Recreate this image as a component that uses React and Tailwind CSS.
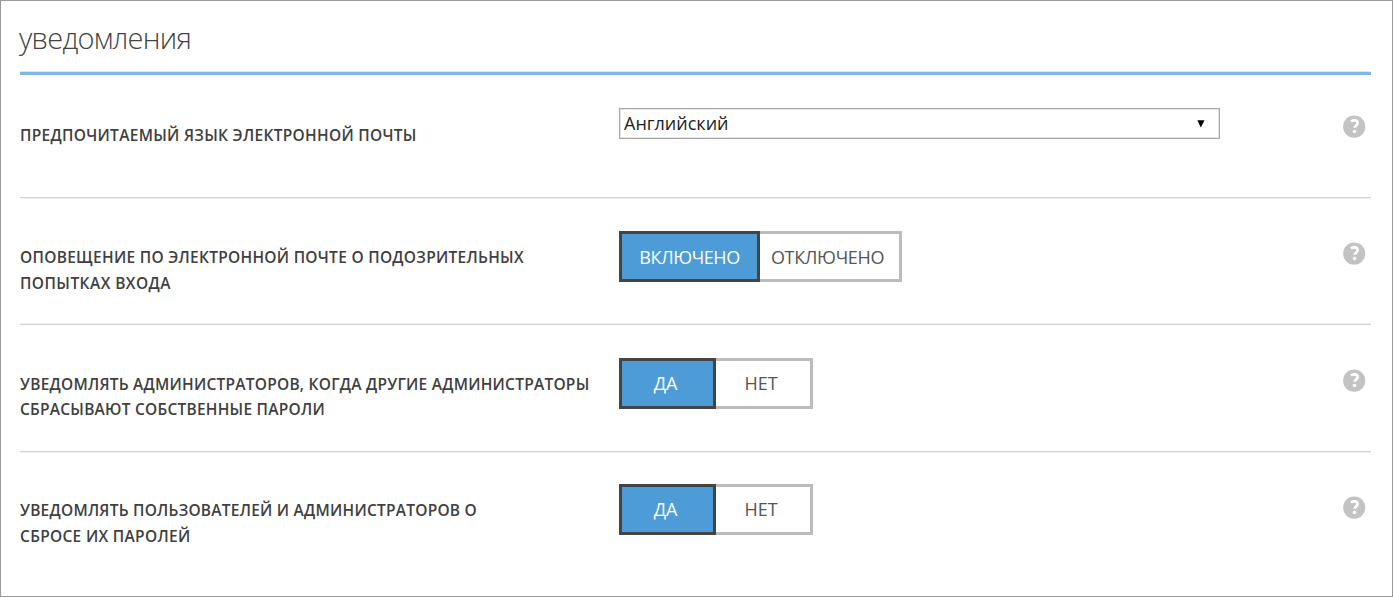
const HelpIcon = ({ className }) => (
  <svg className={`h-[23px] w-[23px] shrink-0 ${className}`} viewBox="0 0 23 23" role="img">
    <circle cx="11.2" cy="11.7" r="11.1" fill="#c3c3c3" />
    <path d="M7.9 6.5C9 5.7 10.1 5.4 11.3 5.4c2 0 3.3 1 3.3 2.7 0 2.3-2.8 2.6-2.8 4.7" fill="none" stroke="#fff" strokeWidth="2.7" />
    <circle cx="11.5" cy="16.5" r="1.8" fill="#fff" />
  </svg>
);

const Label = ({ lines, className }) => (
  <div className={`flex w-[600px] shrink-0 flex-col items-start text-[15.5px] font-semibold text-[#404040] ${className}`}>
    {lines.map(([text, spacing]) => (
      <span key={text} className={`whitespace-nowrap ${spacing}`}>{text}</span>
    ))}
  </div>
);

const Toggle = ({ on, off, className, onClass, offClass }) => (
  <div className={`flex h-[51px] text-[18px] leading-none ${className}`}>
    <button className={`flex items-center justify-center border-[3px] border-[#444] bg-[#4d9cd7] text-white ${onClass}`}>{on}</button>
    <button className={`flex items-center justify-center border-[3px] border-l-0 border-[#bcbcbc] bg-white text-[#555] ${offClass}`}>{off}</button>
  </div>
);

export default function App() {
  return (
    <main className="h-[597px] w-[1393px] overflow-hidden border border-[#9a9a9a] bg-white pl-[18px] pr-[21px] font-['Open_Sans',sans-serif]">
      <div className="ml-px">
        <header className="h-[74px] border-b-[3px] border-[#83b7e3] pt-[17px] shadow-[inset_0_-1px_0_#d9e9f6]">
          <h1 className="-ml-px text-[29px] font-light leading-[40px] text-[#444] tracking-[-0.75px]">уведомления</h1>
        </header>

        <section className="flex h-[123px] items-start border-b border-[#d4d4d4] shadow-[0_1px_0_#f0f0f0]">
          <Label className="mt-[47px] leading-[26px]" lines={[["ПРЕДПОЧИТАЕМЫЙ ЯЗЫК ЭЛЕКТРОННОЙ ПОЧТЫ", "tracking-[0.295px]"]]} />
          <button className="-ml-px mt-[33px] flex h-[31px] w-[601px] items-center justify-between border border-[#a6a6a6] pl-[4px] pr-[14px] text-[18px] leading-none text-[#222] shadow-[inset_0_0_0_1px_#e6e6e6]">
            <span className="pb-[2px]">Английский</span>
            <svg className="h-[8px] w-[8px]" viewBox="0 0 8 8"><path d="M0.3 0.3h7.2L3.9 7.6z" fill="#000" /></svg>
          </button>
          <HelpIcon className="ml-auto mr-[5px] mt-[40px]" />
        </section>

        <section className="flex h-[127px] items-start border-b border-[#d4d4d4] shadow-[inset_0_-1px_0_#f0f0f0]">
          <Label className="mt-[46px] leading-[26px]" lines={[["ОПОВЕЩЕНИЕ ПО ЭЛЕКТРОННОЙ ПОЧТЕ О ПОДОЗРИТЕЛЬНЫХ", "tracking-[0.28px]"], ["ПОПЫТКАХ ВХОДА", "tracking-[0.44px]"]]} />
          <Toggle on="ВКЛЮЧЕНО" off="ОТКЛЮЧЕНО" className="-ml-px mt-[33px]" onClass="w-[141px] tracking-[-0.4px]" offClass="w-[142px] pr-[4px] tracking-[-0.33px]" />
          <HelpIcon className="ml-auto mr-[5px] mt-[44px]" />
        </section>

        <section className="flex h-[127px] items-start border-b border-[#d4d4d4] shadow-[0_1px_0_#f0f0f0]">
          <Label className="mt-[47px] leading-[25px]" lines={[["УВЕДОМЛЯТЬ АДМИНИСТРАТОРОВ, КОГДА ДРУГИЕ АДМИНИСТРАТОРЫ", "tracking-[0.24px]"], ["СБРАСЫВАЮТ СОБСТВЕННЫЕ ПАРОЛИ", "tracking-[0.24px]"]]} />
          <Toggle on="ДА" off="НЕТ" className="-ml-px mt-[33px]" onClass="w-[97px] pb-[2px] pr-[4px]" offClass="w-[97px] pb-[2px] pr-[4px]" />
          <HelpIcon className="ml-auto mr-[5px] mt-[44px]" />
        </section>

        <section className="flex h-[144px] items-start">
          <Label className="mt-[45px] leading-[26px]" lines={[["УВЕДОМЛЯТЬ ПОЛЬЗОВАТЕЛЕЙ И АДМИНИСТРАТОРОВ О", "tracking-[0.235px]"], ["СБРОСЕ ИХ ПАРОЛЕЙ", "tracking-[0.31px]"]]} />
          <Toggle on="ДА" off="НЕТ" className="-ml-px mt-[32px]" onClass="w-[97px] pb-[2px] pr-[4px]" offClass="w-[97px] pb-[2px] pr-[4px]" />
          <HelpIcon className="ml-auto mr-[5px] mt-[44px]" />
        </section>
      </div>
    </main>
  );
}
